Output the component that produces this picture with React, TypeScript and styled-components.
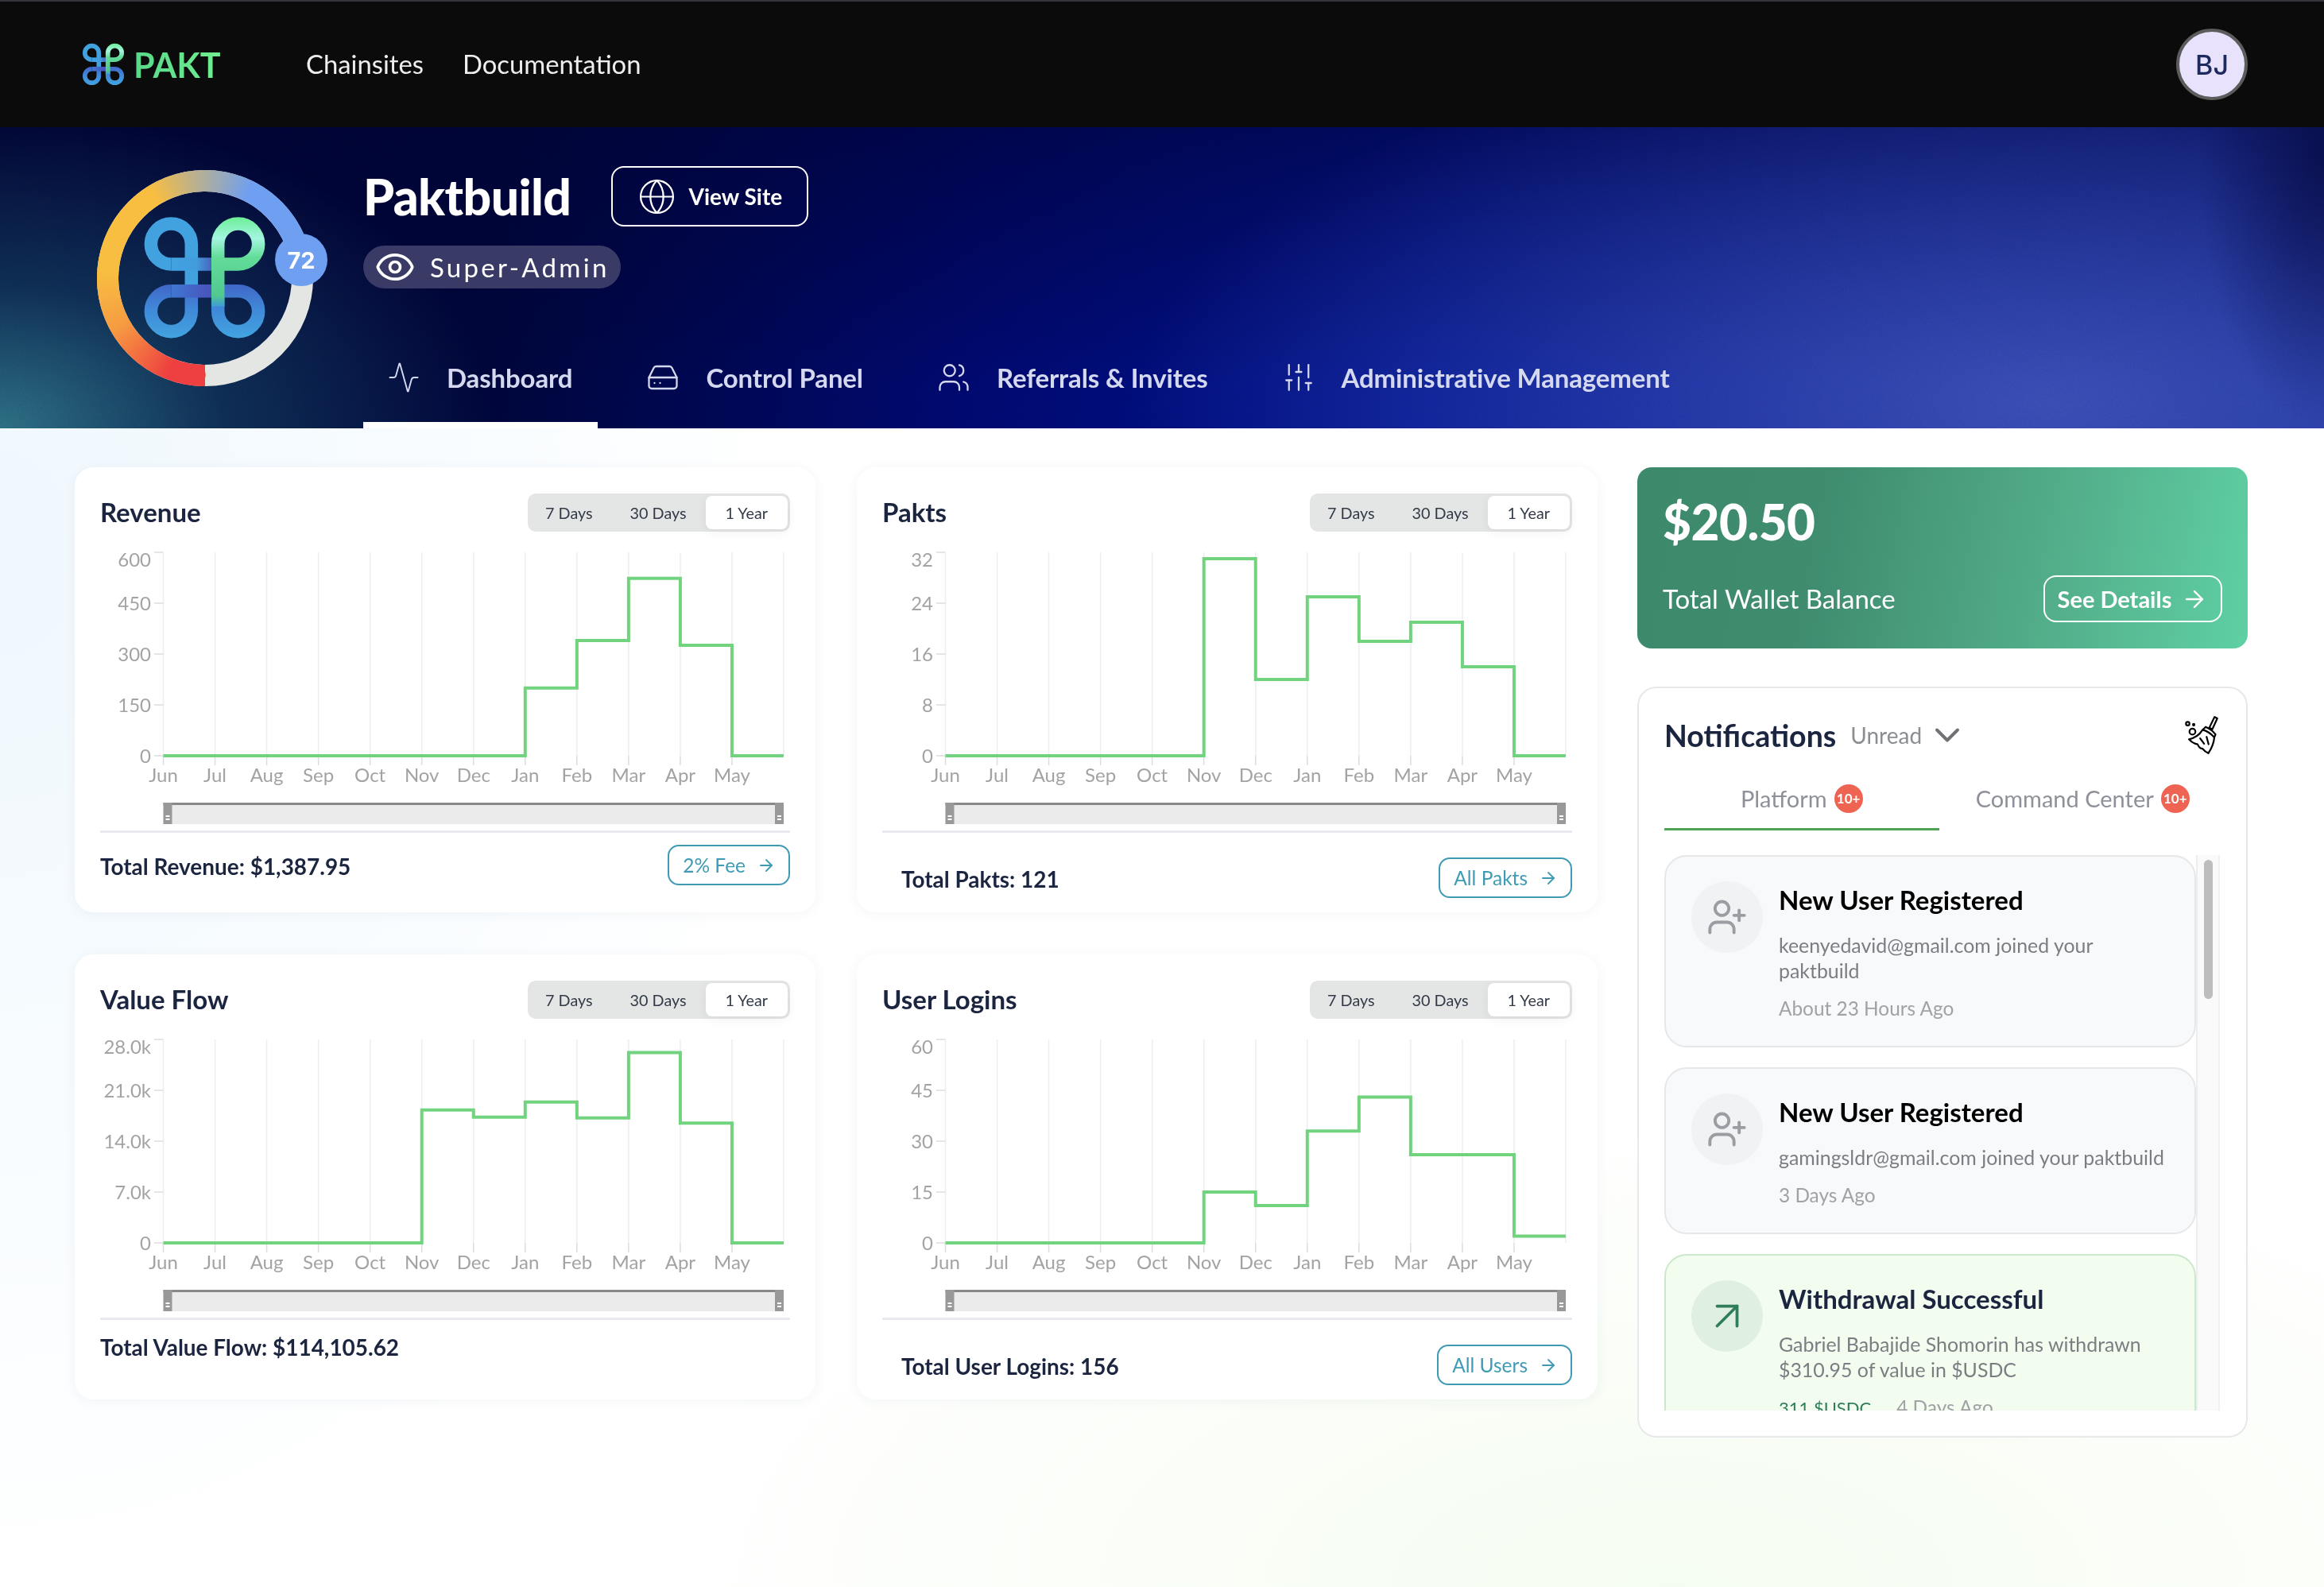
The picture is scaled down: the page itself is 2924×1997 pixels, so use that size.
import React from "react";
import styled, { createGlobalStyle } from "styled-components";
import {
  Activity,
  ArrowRight,
  ArrowUpRight,
  ChevronDown,
  Eye,
  Globe,
  HardDrive,
  SlidersVertical,
  UserPlus,
  Users,
} from "lucide-react";

const GlobalStyle = createGlobalStyle`
  html, body {
    margin: 0;
    padding: 0;
    background: #fff;
    font-family: Lato, "Liberation Sans", sans-serif;
    color: #1c2540;
  }
  * { box-sizing: border-box; }
`;

/* ── Page ───────────────────────────────── */
const Page = styled.div`
  width: 2924px;
  min-height: 1997px;
  overflow: hidden;
  background:
    radial-gradient(ellipse 1300px 600px at 72% 100%, rgba(238, 250, 230, 0.6), transparent 100%),
    radial-gradient(ellipse 1000px 1300px at 0 35%, #eff8fe, transparent 100%),
    #fff;
`;

/* ── Top bar ───────────────────────────────── */
const TopBar = styled.header`
  height: 160px;
  display: flex;
  align-items: center;
  background: #0a0b0a;
  border-top: 2px solid #34343a;
  padding: 0 96px 0 101px;
`;

const Brand = styled.div`
  display: flex;
  align-items: center;
  gap: 9px;
  width: 284px;
`;

const BrandName = styled.span`
  font-size: 43px;
  font-weight: 700;
  line-height: 1;
  background: linear-gradient(90deg, #58d88a, #70ee90);
  -webkit-background-clip: text;
  background-clip: text;
  color: transparent;
`;

const TopNav = styled.nav`
  display: flex;
  gap: 49px;
  flex: 1;
`;

const TopLink = styled.a`
  font-size: 32.8px;
  color: #eeeeee;
  line-height: 1;
`;

const Avatar = styled.div`
  width: 90px;
  height: 90px;
  border-radius: 50%;
  border: 4px solid #5c5c5c;
  background: #e9e2fd;
  color: #1c2a5e;
  font-family: Inter, sans-serif;
  font-size: 34px;
  font-weight: 500;
  display: flex;
  align-items: center;
  justify-content: center;
`;

/* ── Hero band ───────────────────────────────── */
const Hero = styled.section`
  position: relative;
  height: 379px;
  display: flex;
  gap: 43px;
  padding-left: 122px;
  color: #fff;
  background:
    radial-gradient(ellipse 160px 340px at 100% 10%, rgba(4, 8, 60, 0.7), transparent 100%),
    radial-gradient(ellipse 620px 400px at 0 100%, rgba(48, 118, 136, 0.9) 0, rgba(28, 84, 112, 0.5) 45%, transparent 100%),
    radial-gradient(ellipse 1150px 480px at 88% 92%, rgba(68, 86, 186, 0.8), transparent 100%),
    linear-gradient(180deg, rgba(0, 2, 50, 0.55) 0, rgba(0, 2, 50, 0.2) 55%, transparent 85%),
    linear-gradient(98deg, #000530 0, #000538 22%, #00086a 42%, #00138a 62%, #0d2490 100%);
`;

const HeroNoise = styled.svg`
  position: absolute;
  inset: 0;
  width: 100%;
  height: 100%;
  opacity: 0.16;
  mix-blend-mode: overlay;
  pointer-events: none;
`;

const RingWrap = styled.div`
  position: relative;
  margin-top: 54px;
  flex-shrink: 0;
  width: 292px;
  height: 276px;
`;

const RingLogo = styled.div`
  position: absolute;
  left: 51px;
  top: 51px;
`;

const HeroBody = styled.div`
  position: relative;
  display: flex;
  flex-direction: column;
  padding-top: 49px;
  flex: 1;
`;

const TitleRow = styled.div`
  display: flex;
  align-items: center;
  gap: 51px;
  height: 76px;
`;

const HeroTitle = styled.h1`
  margin: 0;
  font-size: 62.5px;
  font-weight: 900;
  letter-spacing: -0.6px;
  line-height: 1;
`;

const ViewSite = styled.a`
  width: 248px;
  height: 76px;
  display: flex;
  align-items: center;
  gap: 15px;
  padding-left: 31px;
  border: 2px solid #fff;
  border-radius: 16px;
  font-size: 28px;
  font-weight: 700;
`;

const RolePill = styled.div`
  align-self: flex-start;
  margin-top: 24px;
  height: 54px;
  width: 324px;
  display: flex;
  align-items: center;
  gap: 18px;
  padding-left: 14px;
  border-radius: 27px;
  background: #3a3a66;
  font-size: 33px;
  letter-spacing: 3.3px;
`;

const Tabs = styled.nav`
  display: flex;
  gap: 31px;
  margin-top: auto;
`;

const Tab = styled.a<{ $active?: boolean }>`
  height: 128px;
  padding: 7px 32px 0 30px;
  display: flex;
  align-items: center;
  gap: 33px;
  font-size: 33px;
  font-weight: 700;
  letter-spacing: -0.13px;
  color: #d5d9f0;
  border-bottom: 8px solid ${({ $active }) => ($active ? "#fff" : "transparent")};
`;

/* ── Main area ───────────────────────────────── */
const Main = styled.main`
  display: flex;
  gap: 50px;
  padding: 49px 96px 0 94px;
`;

const ChartGrid = styled.div`
  display: grid;
  grid-template-columns: 932px 932px;
  grid-auto-rows: 560px;
  gap: 53px 52px;
  width: 1916px;
  flex-shrink: 0;
`;

const Card = styled.section`
  background: #fff;
  border-radius: 24px;
  box-shadow: 0 2px 16px rgba(30, 60, 90, 0.05);
  padding: 33px 32px 0;
  display: flex;
  flex-direction: column;
`;

const CardHead = styled.div`
  display: flex;
  justify-content: space-between;
  align-items: center;
  height: 48px;
`;

const CardTitle = styled.h2`
  margin: 0;
  padding-bottom: 2px;
  font-size: 33px;
  font-weight: 700;
  color: #1c2540;
`;

const Segment = styled.div`
  display: flex;
  height: 48px;
  padding: 3px;
  background: #e4e6e5;
  border-radius: 10px;
`;

const SegmentItem = styled.button<{ $active?: boolean }>`
  border: 0;
  height: 42px;
  padding: 0 ${({ $active }) => ($active ? "25px" : "23px")};
  margin-right: ${({ $active }) => ($active ? "0" : "1px")};
  font: inherit;
  font-size: 19.8px;
  color: #333a48;
  border-radius: 8px;
  background: ${({ $active }) => ($active ? "#fff" : "transparent")};
  box-shadow: ${({ $active }) => ($active ? "0 3px 14px rgba(0,0,0,.06)" : "none")};

  &:first-child {
    padding-left: 19px;
  }
`;

const ChartSvg = styled.svg`
  display: block;
  margin-top: 21px;
  font-family: Lato, "Liberation Sans", sans-serif;
`;

const CardFoot = styled.div<{ $inset?: boolean }>`
  margin-top: 5px;
  border-top: 3px solid #e9e9ef;
  display: flex;
  justify-content: space-between;
  align-items: center;
  padding: ${({ $inset }) => ($inset ? "31px 0 0 24px" : "15px 0 0")};
`;

const FootTotal = styled.div`
  font-size: 27.95px;
  font-weight: 700;
  color: #1c2540;
  line-height: 34px;
  padding-top: 2px;
`;

const FootLink = styled.a`
  height: 51px;
  display: flex;
  align-items: center;
  gap: 14px;
  padding: 0 16px 0 17px;
  border: 2px solid #3f9bb3;
  border-radius: 14px;
  color: #3f9bb3;
  font-size: 24.5px;
`;

/* ── Right column ───────────────────────────────── */
const Side = styled.aside`
  width: 768px;
  display: flex;
  flex-direction: column;
  gap: 48px;
`;

const Wallet = styled.section`
  height: 228px;
  padding: 30px 32px 0;
  border-radius: 18px;
  color: #fff;
  background: linear-gradient(100deg, #3d896b 0, #3f8c6f 30%, #53ae8a 68%, #5fd0a4 100%);
`;

const WalletAmount = styled.div`
  font-size: 62px;
  font-weight: 900;
  letter-spacing: -0.5px;
  line-height: 76px;
`;

const WalletRow = styled.div`
  margin-top: 30px;
  display: flex;
  justify-content: space-between;
  align-items: center;
`;

const WalletLabel = styled.div`
  font-size: 33px;
  padding-bottom: 2px;
`;

const DetailsButton = styled.a`
  width: 225px;
  height: 59px;
  display: flex;
  align-items: center;
  justify-content: center;
  gap: 12px;
  border: 2px solid #fff;
  border-radius: 16px;
  font-size: 29px;
  font-weight: 700;
`;

const Panel = styled.section`
  height: 945px;
  background: #fff;
  border: 2px solid #e8e8ea;
  border-radius: 24px;
  padding: 34px 33px 0 32px;
`;

const PanelHead = styled.div`
  display: flex;
  align-items: center;
  height: 50px;
`;

const PanelTitle = styled.h2`
  margin: 0 18px 0 0;
  font-size: 37.5px;
  font-weight: 700;
  color: #1c2540;
`;

const FilterLabel = styled.span`
  font-size: 28px;
  color: #8a8d92;
  margin-right: 6px;
`;

const Broom = styled.svg`
  margin-left: auto;
`;

const PanelTabs = styled.div`
  display: flex;
  gap: 8px;
  margin-top: 20px;
`;

const PanelTab = styled.button<{ $active?: boolean }>`
  width: 346px;
  height: 75px;
  display: flex;
  align-items: center;
  justify-content: center;
  gap: 9px;
  background: none;
  border: 0;
  border-bottom: 3px solid ${({ $active }) => ($active ? "#4fa352" : "transparent")};
  padding: 0 0 3px;
  font: inherit;
  font-size: 29px;
  color: #8e9199;
`;

const CountBadge = styled.span`
  width: 36px;
  height: 36px;
  border-radius: 50%;
  background: #ef6352;
  color: #fff;
  font-size: 17px;
  font-weight: 700;
  display: flex;
  align-items: center;
  justify-content: center;
`;

const ListArea = styled.div`
  display: flex;
  margin-top: 31px;
  height: 699px;
`;

const List = styled.div`
  width: 670px;
  overflow: hidden;
  display: flex;
  flex-direction: column;
  gap: 25px;
`;

const Track = styled.div`
  width: 30px;
  padding: 6px 7px 0 8px;
  background: #fafafa;
  border-left: 2px solid #eeeeee;
  border-right: 2px solid #f0f0f0;
`;

const Thumb = styled.div`
  height: 175px;
  border-radius: 8px;
  background: #bdbdbd;
`;

const Item = styled.article<{ $tone?: "green" }>`
  flex-shrink: 0;
  display: flex;
  gap: 20px;
  padding: 31px 20px 31px 32px;
  border-radius: 28px;
  border: 2px solid ${({ $tone }) => ($tone ? "#cbe8cc" : "#e6e7e9")};
  background: ${({ $tone }) => ($tone ? "#f3fdef" : "#f8f9fb")};
`;

const ItemIcon = styled.div<{ $tone?: "green" }>`
  width: 90px;
  height: 90px;
  flex-shrink: 0;
  border-radius: 50%;
  display: flex;
  align-items: center;
  justify-content: center;
  background: ${({ $tone }) => ($tone ? "#e0f0e0" : "#f1f2f4")};
  color: ${({ $tone }) => ($tone ? "#2f7d5b" : "#9a9da2")};
`;

const ItemBody = styled.div`
  padding-top: 3px;
  min-width: 0;
`;

const ItemTitle = styled.h3<{ $tone?: "green" }>`
  margin: 0;
  font-size: 33px;
  line-height: 40px;
  font-weight: 700;
  color: ${({ $tone }) => ($tone ? "#1c2540" : "#000")};
`;

const ItemText = styled.p`
  margin: 21px 0 0;
  max-width: 495px;
  font-size: 24.9px;
  line-height: 32px;
  color: #7a7d82;
`;

const ItemMeta = styled.div`
  margin-top: 16px;
  display: flex;
  align-items: baseline;
  gap: 32px;
  font-size: 24.4px;
  line-height: 32px;
  color: #a0a2a6;
`;

const MetaAmount = styled.span`
  color: #2f7d5b;
  font-size: 22px;
`;

/* ── Drawings ───────────────────────────────── */
// the cmd-shaped mark: blue loops underneath, green loop over the crossing
function PaktMark({ size, id }: { size: number; id: string }) {
  return (
    <svg width={size} height={size} viewBox="-25 -25 511 511" fill="none" strokeWidth="50">
      <defs>
        <linearGradient id={`${id}-top`} x1="100" y1="0" x2="281" y2="0" gradientUnits="userSpaceOnUse">
          <stop offset="0" stopColor="#42a2e2" />
          <stop offset="0.55" stopColor="#429cdc" />
          <stop offset="1" stopColor="#4a4cb4" />
        </linearGradient>
        <linearGradient id={`${id}-bar`} x1="100" y1="0" x2="281" y2="0" gradientUnits="userSpaceOnUse">
          <stop offset="0" stopColor="#3f78d2" />
          <stop offset="1" stopColor="#4a4cb8" />
        </linearGradient>
        <linearGradient id={`${id}-low`} x1="0" y1="461" x2="0" y2="256" gradientUnits="userSpaceOnUse">
          <stop offset="0" stopColor="#42a4e0" />
          <stop offset="0.55" stopColor="#4088d8" />
          <stop offset="1" stopColor="#4066c8" />
        </linearGradient>
        <linearGradient id={`${id}-green`} x1="0" y1="340" x2="0" y2="0" gradientUnits="userSpaceOnUse">
          <stop offset="0" stopColor="#3f9ad8" />
          <stop offset="0.12" stopColor="#50c890" />
          <stop offset="0.55" stopColor="#62dc98" />
          <stop offset="0.76" stopColor="#a4f5e0" />
          <stop offset="1" stopColor="#6def98" />
        </linearGradient>
      </defs>
      <path d="M180 300 V102 A77 77 0 1 0 103 179" stroke="#42a2e0" />
      <path d="M180 260 V358 A77 77 0 1 1 103 281" stroke={`url(#${id}-low)`} />
      <path d="M281 260 V358 A77 77 0 1 0 358 281 H281" stroke={`url(#${id}-low)`} />
      <path d="M103 179 H281" stroke={`url(#${id}-top)`} />
      <path d="M103 281 H281" stroke={`url(#${id}-bar)`} />
      <path d="M281 340 V102 A77 77 0 1 1 358 179 H281" stroke={`url(#${id}-green)`} />
    </svg>
  );
}

const mix = (a: number[], b: number[], t: number) =>
  `rgb(${a.map((v, i) => Math.round(v + (b[i] - v) * t)).join(",")})`;

const ringStops: [number, number[]][] = [
  [0, [238, 64, 64]],
  [22, [238, 64, 64]],
  [62, [246, 156, 66]],
  [95, [247, 190, 66]],
  [150, [247, 190, 66]],
  [178, [180, 176, 150]],
  [208, [111, 159, 240]],
  [260, [111, 159, 240]],
];

function ringColor(deg: number) {
  for (let i = 1; i < ringStops.length; i++) {
    const [d0, c0] = ringStops[i - 1];
    const [d1, c1] = ringStops[i];
    if (deg <= d1) return mix(c0, c1, (deg - d0) / (d1 - d0));
  }
  return "rgb(111,159,240)";
}

const polar = (deg: number, r: number) => {
  const a = (deg * Math.PI) / 180;
  return [136 - r * Math.sin(a), 136 + r * Math.cos(a)];
};

function ScoreRing({ score }: { score: number }) {
  const end = (score / 100) * 360;
  const segs: React.ReactNode[] = [];
  for (let d = end; d > 0; d -= 2) {
    const from = Math.max(d - 2.6, 0);
    const [x0, y0] = polar(from, 122.5);
    const [x1, y1] = polar(d, 122.5);
    segs.push(
      <path
        key={d}
        d={`M${x0} ${y0} A122.5 122.5 0 0 1 ${x1} ${y1}`}
        stroke={ringColor(d)}
        strokeWidth="27"
        fill="none"
      />
    );
  }
  const [cx, cy] = polar(6, 122.5);
  return (
    <svg width="292" height="276" viewBox="0 0 292 276" overflow="visible">
      <circle cx="136" cy="136" r="122.5" fill="none" stroke="#e4e6e4" strokeWidth="27" />
      <circle cx={cx} cy={cy} r="13.5" fill="#ee4040" />
      {segs}
      <circle cx="257" cy="113" r="33" fill="#6f9ff0" />
      <text
        x="257"
        y="113"
        textAnchor="middle"
        dominantBaseline="central"
        fill="#fff"
        fontFamily="Inter, sans-serif"
        fontWeight="700"
        fontSize="29"
      >
        {score}
      </text>
    </svg>
  );
}

const months = ["Jun", "Jul", "Aug", "Sep", "Oct", "Nov", "Dec", "Jan", "Feb", "Mar", "Apr", "May"];

const PLOT_L = 79.5;
const PLOT_R = 860;
const PLOT_T = 5;
const PLOT_B = 261;

function StepChart({ values, max, ticks }: { values: number[]; max: number; ticks: string[] }) {
  const step = (PLOT_R - PLOT_L) / 12;
  const xs = Array.from({ length: 13 }, (_, i) => PLOT_L + i * step);
  const y = (v: number) => PLOT_B - ((PLOT_B - PLOT_T) * v) / max;
  let d = `M${xs[0]} ${y(values[0])}`;
  values.forEach((v, i) => {
    if (i > 0) d += ` H${xs[i]} V${y(v)}`;
  });
  d += ` H${xs[12]}`;
  const tickGap = (PLOT_B - PLOT_T) / (ticks.length - 1);

  return (
    <ChartSvg width="868" height="350" viewBox="0 0 868 350">
      {xs.map((x, i) => (
        <g key={x}>
          <line x1={x} x2={x} y1={PLOT_T} y2={PLOT_B} stroke="#eeeeee" strokeWidth="1.5" />
          {i < 12 && <line x1={x} x2={x} y1={PLOT_B} y2={PLOT_B + 12} stroke="#dddddd" strokeWidth="1.5" />}
          {i < 12 && (
            <text x={x} y={284} textAnchor="middle" dominantBaseline="central" fontSize="24" fill="#a3a3a3">
              {months[i]}
            </text>
          )}
        </g>
      ))}
      {ticks.map((t, i) => {
        const ty = PLOT_T + i * tickGap;
        return (
          <g key={t}>
            <line x1={68} x2={PLOT_L} y1={ty} y2={ty} stroke="#dddddd" strokeWidth="1.5" />
            <text
              x={64}
              y={i === 0 ? ty + 8 : ty - 0.5}
              textAnchor="end"
              dominantBaseline="central"
              fontSize="24"
              fill="#a3a3a3"
            >
              {t}
            </text>
          </g>
        );
      })}
      <path d={d} fill="none" stroke="#72d37f" strokeWidth="4" />
      <rect x={PLOT_L} y={320} width={PLOT_R - PLOT_L} height={27} fill="#ebebeb" />
      <rect x={PLOT_L} y={320} width={PLOT_R - PLOT_L} height={3} fill="#888888" />
      {[PLOT_L, PLOT_R - 11].map((x) => (
        <g key={x}>
          <rect x={x} y={320} width={11} height={27} fill="#999999" />
          <rect x={x + 3} y={336} width={5} height={2} fill="#fff" />
          <rect x={x + 3} y={340} width={5} height={2} fill="#fff" />
        </g>
      ))}
    </ChartSvg>
  );
}

function BroomIcon() {
  return (
    <Broom width="45" height="50" viewBox="90 35 135 160" fill="none" stroke="#000" strokeWidth="7" strokeLinejoin="round" strokeLinecap="round">
      <path d="M208 42 L219 48 L199 92 L187 85 Z" />
      <path d="M172 82 Q196 92 212 112 L207 124 Q185 100 160 94 Z" />
      <path d="M160 94 Q140 125 105 132 Q122 150 140 152 Q146 168 160 170 Q170 182 183 188 Q205 155 207 124" />
      <path d="M150 128 L166 150 M176 122 L184 152" />
      <circle cx="100" cy="69" r="7" />
      <circle cx="124" cy="73" r="3" />
      <circle cx="119" cy="101" r="12" />
    </Broom>
  );
}

/* ── Data ───────────────────────────────── */
const periods = ["7 Days", "30 Days", "1 Year"];

type ChartCard = {
  title: string;
  values: number[];
  max: number;
  ticks: string[];
  total: string;
  link?: string;
  inset?: boolean;
};

const charts: ChartCard[] = [
  {
    title: "Revenue",
    values: [0, 0, 0, 0, 0, 0, 0, 200, 340, 523, 326, 0],
    max: 600,
    ticks: ["600", "450", "300", "150", "0"],
    total: "Total Revenue: $1,387.95",
    link: "2% Fee",
  },
  {
    title: "Pakts",
    values: [0, 0, 0, 0, 0, 31, 12, 25, 18, 21, 14, 0],
    max: 32,
    ticks: ["32", "24", "16", "8", "0"],
    total: "Total Pakts: 121",
    link: "All Pakts",
    inset: true,
  },
  {
    title: "Value Flow",
    values: [0, 0, 0, 0, 0, 18300, 17300, 19400, 17200, 26200, 16500, 0],
    max: 28000,
    ticks: ["28.0k", "21.0k", "14.0k", "7.0k", "0"],
    total: "Total Value Flow: $114,105.62",
  },
  {
    title: "User Logins",
    values: [0, 0, 0, 0, 0, 15, 11, 33, 43, 26, 26, 2],
    max: 60,
    ticks: ["60", "45", "30", "15", "0"],
    total: "Total User Logins: 156",
    link: "All Users",
    inset: true,
  },
];

export default function App() {
  return (
    <Page>
      <GlobalStyle />
      <TopBar>
        <Brand>
          <PaktMark size={58} id="brand" />
          <BrandName>PAKT</BrandName>
        </Brand>
        <TopNav>
          <TopLink>Chainsites</TopLink>
          <TopLink>Documentation</TopLink>
        </TopNav>
        <Avatar>BJ</Avatar>
      </TopBar>

      <Hero>
        <HeroNoise aria-hidden="true">
          <filter id="grain">
            <feTurbulence type="fractalNoise" baseFrequency="0.45" numOctaves="2" seed="4" />
            <feColorMatrix type="saturate" values="0" />
          </filter>
          <rect width="100%" height="100%" filter="url(#grain)" />
        </HeroNoise>
        <RingWrap>
          <ScoreRing score={72} />
          <RingLogo>
            <PaktMark size={169} id="hero" />
          </RingLogo>
        </RingWrap>
        <HeroBody>
          <TitleRow>
            <HeroTitle>Paktbuild</HeroTitle>
            <ViewSite>
              <Globe size={49} strokeWidth={1.1} />
              View Site
            </ViewSite>
          </TitleRow>
          <RolePill>
            <Eye size={52} strokeWidth={1.7} />
            Super-Admin
          </RolePill>
          <Tabs>
            <Tab $active>
              <Activity size={42} strokeWidth={1.1} />
              Dashboard
            </Tab>
            <Tab>
              <HardDrive size={42} strokeWidth={1.3} />
              Control Panel
            </Tab>
            <Tab>
              <Users size={42} strokeWidth={1.3} />
              Referrals &amp; Invites
            </Tab>
            <Tab>
              <SlidersVertical size={42} strokeWidth={1.3} />
              Administrative Management
            </Tab>
          </Tabs>
        </HeroBody>
      </Hero>

      <Main>
        <ChartGrid>
          {charts.map((c) => (
            <Card key={c.title}>
              <CardHead>
                <CardTitle>{c.title}</CardTitle>
                <Segment>
                  {periods.map((p) => (
                    <SegmentItem key={p} $active={p === "1 Year"}>
                      {p}
                    </SegmentItem>
                  ))}
                </Segment>
              </CardHead>
              <StepChart values={c.values} max={c.max} ticks={c.ticks} />
              <CardFoot $inset={c.inset}>
                <FootTotal>{c.total}</FootTotal>
                {c.link && (
                  <FootLink>
                    {c.link}
                    <ArrowRight size={24} strokeWidth={1.8} />
                  </FootLink>
                )}
              </CardFoot>
            </Card>
          ))}
        </ChartGrid>

        <Side>
          <Wallet>
            <WalletAmount>$20.50</WalletAmount>
            <WalletRow>
              <WalletLabel>Total Wallet Balance</WalletLabel>
              <DetailsButton>
                See Details
                <ArrowRight size={34} strokeWidth={1.7} />
              </DetailsButton>
            </WalletRow>
          </Wallet>

          <Panel>
            <PanelHead>
              <PanelTitle>Notifications</PanelTitle>
              <FilterLabel>Unread</FilterLabel>
              <ChevronDown size={52} color="#6f7175" strokeWidth={1.8} />
              <BroomIcon />
            </PanelHead>
            <PanelTabs>
              <PanelTab $active>
                Platform <CountBadge>10+</CountBadge>
              </PanelTab>
              <PanelTab>
                Command Center <CountBadge>10+</CountBadge>
              </PanelTab>
            </PanelTabs>
            <ListArea>
              <List>
                <Item>
                  <ItemIcon>
                    <UserPlus size={52} strokeWidth={1.8} />
                  </ItemIcon>
                  <ItemBody>
                    <ItemTitle>New User Registered</ItemTitle>
                    <ItemText>keenyedavid@gmail.com joined your paktbuild</ItemText>
                    <ItemMeta>About 23 Hours Ago</ItemMeta>
                  </ItemBody>
                </Item>
                <Item>
                  <ItemIcon>
                    <UserPlus size={52} strokeWidth={1.8} />
                  </ItemIcon>
                  <ItemBody>
                    <ItemTitle>New User Registered</ItemTitle>
                    <ItemText>gamingsldr@gmail.com joined your paktbuild</ItemText>
                    <ItemMeta>3 Days Ago</ItemMeta>
                  </ItemBody>
                </Item>
                <Item $tone="green">
                  <ItemIcon $tone="green">
                    <ArrowUpRight size={60} strokeWidth={1.5} />
                  </ItemIcon>
                  <ItemBody>
                    <ItemTitle $tone="green">Withdrawal Successful</ItemTitle>
                    <ItemText>Gabriel Babajide Shomorin has withdrawn $310.95 of value in $USDC</ItemText>
                    <ItemMeta>
                      <MetaAmount>311 $USDC</MetaAmount>
                      <span>4 Days Ago</span>
                    </ItemMeta>
                  </ItemBody>
                </Item>
              </List>
              <Track>
                <Thumb />
              </Track>
            </ListArea>
          </Panel>
        </Side>
      </Main>
    </Page>
  );
}
